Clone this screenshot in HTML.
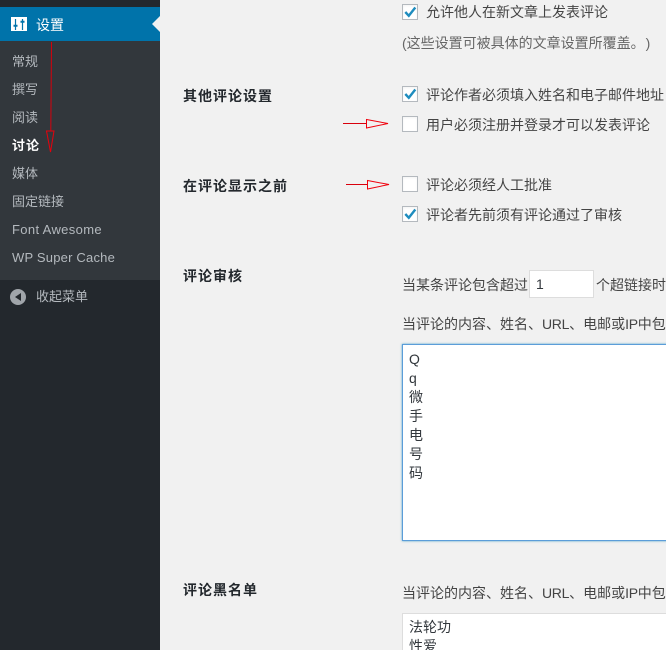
<!DOCTYPE html>
<html lang="zh">
<head>
<meta charset="utf-8">
<style>
html,body{margin:0;padding:0;width:666px;height:650px;overflow:hidden;background:#f1f1f1}
body{position:relative;font-family:"Liberation Sans","Noto Sans CJK SC","WenQuanYi Zen Hei",sans-serif;font-size:14px;color:#444}
.a{position:absolute;white-space:nowrap}
#side{position:absolute;left:0;top:0;width:160px;height:650px;background:#23282d}
#cur{position:absolute;left:0;top:7px;width:160px;height:34px;background:#0073aa}
#sub{position:absolute;left:0;top:41px;width:160px;height:239px;background:#32373c}
.m{position:absolute;left:12px;font-size:13px;line-height:18px;color:#b4b9be;white-space:nowrap}
.l{letter-spacing:.35px}
.t{line-height:20px;left:426px;color:#444}
.h{line-height:20px;left:183px;font-weight:bold;color:#23282d;letter-spacing:1px}
.c{position:absolute;left:402px;width:14px;height:14px;border:1px solid #b4b9be;background:#fff;box-shadow:inset 0 1px 2px rgba(0,0,0,.05)}
.c svg{position:absolute;left:0;top:0}
.ta{position:absolute;background:#fff;box-sizing:border-box;font-size:14px;line-height:19px;color:#32373c;padding:5px 6px;overflow:hidden}
.n{letter-spacing:-.3px}
</style>
</head>
<body>
<div id="side"></div>
<div id="cur"></div>
<div id="sub"></div>

<svg class="a" style="left:11px;top:17px" width="16" height="14" viewBox="0 0 16 14"><rect width="16" height="14" fill="#fff"/><path d="M4.500 2V13M11.500 2V13" stroke="#0073aa" stroke-width="1.200"/><path d="M2.500 8.700H6.500M9.500 4.700H13.500" stroke="#0073aa" stroke-width="2"/></svg>
<div class="a" style="left:36px;top:16px;font-size:14px;line-height:18px;color:#fff">设置</div>
<svg class="a" style="left:152px;top:16px" width="8" height="16" viewBox="0 0 8 16"><path d="M8 0V16L0 8Z" fill="#f1f1f1"/></svg>

<div class="m" style="top:53px">常规</div>
<div class="m" style="top:81px">撰写</div>
<div class="m" style="top:109px">阅读</div>
<div class="m" style="top:137px;color:#fff;font-weight:bold;letter-spacing:1px">讨论</div>
<div class="m" style="top:165px">媒体</div>
<div class="m" style="top:193px">固定链接</div>
<div class="m l" style="top:221px">Font Awesome</div>
<div class="m l" style="top:249px;letter-spacing:.2px">WP Super Cache</div>

<svg class="a" style="left:10px;top:289px" width="16" height="16" viewBox="0 0 16 16"><circle cx="8" cy="8" r="8" fill="#a0a5aa"/><path d="M5 8L11 4V12Z" fill="#23282d"/></svg>
<div class="m" style="left:36px;top:288px">收起菜单</div>

<svg class="a" style="left:44px;top:40px" width="14" height="114" viewBox="0 0 14 114"><path d="M7.500 2L6.800 91" stroke="#d8000c" stroke-width="1" fill="none"/><path d="M2.500 91H10L6.500 112Z" stroke="#e8000c" stroke-width="1" fill="none"/></svg>

<div class="c" style="top:4px"><svg width="14" height="14" viewBox="0 0 14 14"><path d="M2.300 7L5.800 10.800L12.300 2.500" stroke="#1e8cbe" stroke-width="2.400" fill="none"/></svg></div>
<div class="a t" style="top:2px">允许他人在新文章上发表评论</div>
<div class="a t" style="left:402px;top:33px;color:#666">(这些设置可被具体的文章设置所覆盖。<span style="margin-left:8px">)</span></div>

<div class="a h" style="top:86px">其他评论设置</div>
<div class="c" style="top:86px"><svg width="14" height="14" viewBox="0 0 14 14"><path d="M2.300 7L5.800 10.800L12.300 2.500" stroke="#1e8cbe" stroke-width="2.400" fill="none"/></svg></div>
<div class="a t" style="top:85px">评论作者必须填入姓名和电子邮件地址</div>
<div class="c" style="top:116px"></div>
<div class="a t" style="top:115px">用户必须注册并登录才可以发表评论</div>
<svg class="a" style="left:342px;top:116px" width="50" height="16" viewBox="0 0 50 16"><path d="M1 7.500H24" stroke="#d8000c"/><path d="M24.500 3.500V12L46 7.500Z" stroke="#f0000c" fill="none"/></svg>

<div class="a h" style="top:176px">在评论显示之前</div>
<div class="c" style="top:176px"></div>
<div class="a t" style="top:175px">评论必须经人工批准</div>
<svg class="a" style="left:345px;top:177px" width="50" height="16" viewBox="0 0 50 16"><path d="M1 7.500H22" stroke="#d8000c"/><path d="M22.500 3.500V12L44 7.500Z" stroke="#f0000c" fill="none"/></svg>
<div class="c" style="top:206px"><svg width="14" height="14" viewBox="0 0 14 14"><path d="M2.300 7L5.800 10.800L12.300 2.500" stroke="#1e8cbe" stroke-width="2.400" fill="none"/></svg></div>
<div class="a t" style="top:205px">评论者先前须有评论通过了审核</div>

<div class="a h" style="top:266px">评论审核</div>
<div class="a t" style="left:402px;top:275px">当某条评论包含超过</div>
<div class="a" style="left:529px;top:270px;width:65px;height:28px;box-sizing:border-box;border:1px solid #ddd;background:#fff;line-height:26px;padding-left:6px;font-size:14px;color:#32373c">1</div>
<div class="a t" style="left:596px;top:275px">个超链接时</div>
<div class="a t" style="left:402px;top:314px">当评论的内容、姓名、<span class="n">URL</span>、电邮或<span class="n">IP</span>中包含</div>
<div class="ta" style="left:402px;top:344px;width:280px;height:197px;border:1px solid #5b9dd9;box-shadow:0 0 2px rgba(30,140,190,.8)">Q<br>q<br>微<br>手<br>电<br>号<br>码</div>

<div class="a h" style="top:580px">评论黑名单</div>
<div class="a t" style="left:402px;top:583px">当评论的内容、姓名、<span class="n">URL</span>、电邮或<span class="n">IP</span>中包含</div>
<div class="ta" style="left:402px;top:613px;width:280px;height:60px;border:1px solid #ddd;padding-top:4px">法轮功<br>性爱</div>
</body>
</html>
